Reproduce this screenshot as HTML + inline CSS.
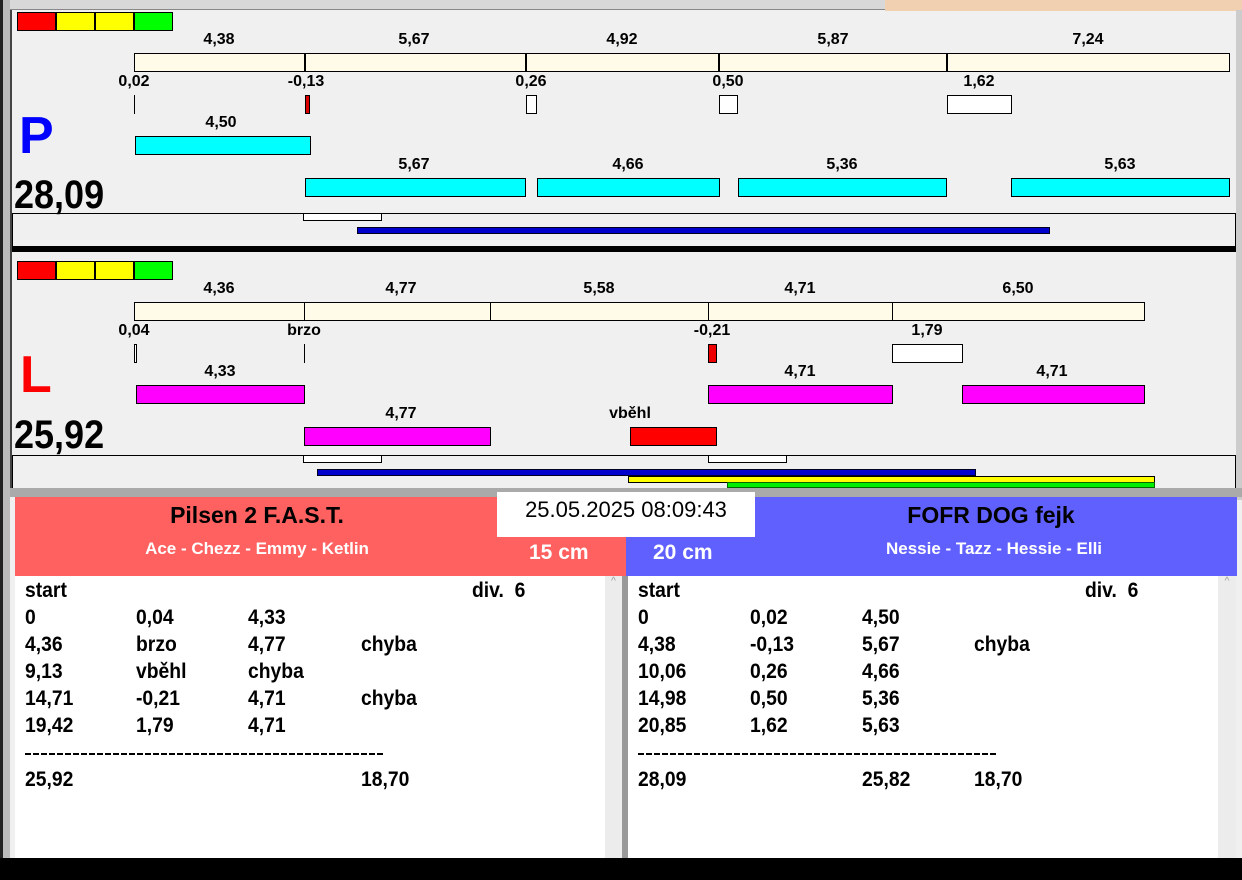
<!DOCTYPE html>
<html><head><meta charset="utf-8"><style>
*{margin:0;padding:0;box-sizing:border-box}
body{width:1242px;height:880px;position:relative;overflow:hidden;background:#f0f0f0;font-family:"Liberation Sans",sans-serif}
div{position:absolute}
.l{font-weight:bold;font-size:16px;transform:translateX(-50%);white-space:nowrap;line-height:18px;color:#000}
.b{border:1px solid #000}
.t{font-weight:bold;font-size:21px;line-height:24px;white-space:nowrap;transform:scaleX(0.92);transform-origin:left}
.d{height:2px;width:360px;background:repeating-linear-gradient(90deg,#000 0 6px,transparent 6px 8px)}
</style></head><body>
<!-- frame -->
<div style="left:0;top:0;width:1242px;height:10px;background:#d8d8d8;border-bottom:1px solid #888"></div>
<div style="left:885px;top:0;width:357px;height:11px;background:#f0d0b0"></div>
<div style="left:0;top:0;width:3px;height:880px;background:#222"></div>
<div style="left:3px;top:0;width:7px;height:880px;background:#bbb"></div>
<div style="left:10px;top:10px;width:2px;height:480px;background:#444"></div>
<div style="left:1236px;top:10px;width:6px;height:490px;background:#ccc"></div>

<!-- P section -->
<div style="left:17px;top:12px;width:39px;height:19px;background:#f00" class="b"></div>
<div style="left:56px;top:12px;width:39px;height:19px;background:#ff0" class="b"></div>
<div style="left:95px;top:12px;width:39px;height:19px;background:#ff0" class="b"></div>
<div style="left:134px;top:12px;width:39px;height:19px;background:#0f0" class="b"></div>

<div class="l" style="left:219px;top:31px">4,38</div>
<div class="l" style="left:414px;top:31px">5,67</div>
<div class="l" style="left:622px;top:31px">4,92</div>
<div class="l" style="left:833px;top:31px">5,87</div>
<div class="l" style="left:1088px;top:31px">7,24</div>
<div class="b" style="left:134px;top:53px;width:1096px;height:19px;background:#fffbe8"></div>
<div style="left:304px;top:53px;width:2px;height:19px;background:#000"></div>
<div style="left:525px;top:53px;width:2px;height:19px;background:#000"></div>
<div style="left:718px;top:53px;width:2px;height:19px;background:#000"></div>
<div style="left:946px;top:53px;width:2px;height:19px;background:#000"></div>

<div class="l" style="left:134px;top:73px">0,02</div>
<div class="l" style="left:306px;top:73px">-0,13</div>
<div class="l" style="left:531px;top:73px">0,26</div>
<div class="l" style="left:728px;top:73px">0,50</div>
<div class="l" style="left:979px;top:73px">1,62</div>
<div style="left:134px;top:95px;width:1px;height:19px;background:#000"></div>
<div class="b" style="left:305px;top:95px;width:5px;height:19px;background:#d00"></div>
<div class="b" style="left:526px;top:95px;width:11px;height:19px;background:#fff"></div>
<div class="b" style="left:719px;top:95px;width:19px;height:19px;background:#fff"></div>
<div class="b" style="left:947px;top:95px;width:65px;height:19px;background:#fff"></div>

<div style="left:19px;top:106px;font-size:52px;font-weight:bold;color:#00f;line-height:60px">P</div>
<div class="l" style="left:221px;top:114px">4,50</div>
<div class="b" style="left:135px;top:136px;width:176px;height:19px;background:#0ff"></div>
<div class="l" style="left:414px;top:156px">5,67</div>
<div class="l" style="left:628px;top:156px">4,66</div>
<div class="l" style="left:842px;top:156px">5,36</div>
<div class="l" style="left:1120px;top:156px">5,63</div>
<div class="b" style="left:305px;top:178px;width:221px;height:19px;background:#0ff"></div>
<div class="b" style="left:537px;top:178px;width:183px;height:19px;background:#0ff"></div>
<div class="b" style="left:738px;top:178px;width:209px;height:19px;background:#0ff"></div>
<div class="b" style="left:1011px;top:178px;width:219px;height:19px;background:#0ff"></div>
<div style="left:14px;top:172px;font-size:40px;font-weight:bold;line-height:46px;transform:scaleX(0.9);transform-origin:left">28,09</div>

<div class="b" style="left:12px;top:213px;width:1224px;height:34px;border-bottom:none"></div>
<div class="b" style="left:303px;top:213px;width:79px;height:8px;background:#fff"></div>
<div style="left:357px;top:227px;width:693px;height:7px;background:#00c;border:1px solid #002"></div>
<div style="left:12px;top:246px;width:1224px;height:6px;background:#000"></div>

<!-- L section -->
<div style="left:17px;top:261px;width:39px;height:19px;background:#f00" class="b"></div>
<div style="left:56px;top:261px;width:39px;height:19px;background:#ff0" class="b"></div>
<div style="left:95px;top:261px;width:39px;height:19px;background:#ff0" class="b"></div>
<div style="left:134px;top:261px;width:39px;height:19px;background:#0f0" class="b"></div>

<div class="l" style="left:219px;top:280px">4,36</div>
<div class="l" style="left:401px;top:280px">4,77</div>
<div class="l" style="left:599px;top:280px">5,58</div>
<div class="l" style="left:800px;top:280px">4,71</div>
<div class="l" style="left:1018px;top:280px">6,50</div>
<div class="b" style="left:134px;top:302px;width:1011px;height:19px;background:#fffbe8"></div>
<div style="left:304px;top:302px;width:1px;height:19px;background:#000"></div>
<div style="left:490px;top:302px;width:1px;height:19px;background:#000"></div>
<div style="left:708px;top:302px;width:1px;height:19px;background:#000"></div>
<div style="left:892px;top:302px;width:1px;height:19px;background:#000"></div>

<div class="l" style="left:134px;top:322px">0,04</div>
<div class="l" style="left:304px;top:322px">brzo</div>
<div class="l" style="left:712px;top:322px">-0,21</div>
<div class="l" style="left:927px;top:322px">1,79</div>
<div class="b" style="left:134px;top:344px;width:3px;height:19px;background:#fff"></div>
<div style="left:304px;top:344px;width:1px;height:19px;background:#000"></div>
<div class="b" style="left:708px;top:344px;width:9px;height:19px;background:#e00"></div>
<div class="b" style="left:892px;top:344px;width:71px;height:19px;background:#fff"></div>

<div style="left:20px;top:345px;font-size:52px;font-weight:bold;color:#f00;line-height:60px">L</div>
<div class="l" style="left:220px;top:363px">4,33</div>
<div class="l" style="left:800px;top:363px">4,71</div>
<div class="l" style="left:1052px;top:363px">4,71</div>
<div class="b" style="left:136px;top:385px;width:169px;height:19px;background:#f0f"></div>
<div class="b" style="left:708px;top:385px;width:185px;height:19px;background:#f0f"></div>
<div class="b" style="left:962px;top:385px;width:183px;height:19px;background:#f0f"></div>
<div class="l" style="left:401px;top:405px">4,77</div>
<div class="l" style="left:630px;top:405px">vběhl</div>
<div class="b" style="left:304px;top:427px;width:187px;height:19px;background:#f0f"></div>
<div class="b" style="left:630px;top:427px;width:87px;height:19px;background:#f00"></div>
<div style="left:14px;top:412px;font-size:40px;font-weight:bold;line-height:46px;transform:scaleX(0.9);transform-origin:left">25,92</div>

<div class="b" style="left:12px;top:455px;width:1224px;height:33px;border-bottom:none"></div>
<div class="b" style="left:303px;top:455px;width:79px;height:8px;background:#fff"></div>
<div class="b" style="left:708px;top:455px;width:79px;height:8px;background:#fff"></div>
<div style="left:317px;top:469px;width:659px;height:7px;background:#00c;border:1px solid #002"></div>
<div class="b" style="left:628px;top:476px;width:527px;height:7px;background:#ff0"></div>
<div style="left:727px;top:482px;width:428px;height:6px;background:#0e0;border:1px solid #060"></div>
<div style="left:10px;top:488px;width:1232px;height:9px;background:#aaa"></div>

<!-- bottom panels -->
<div style="left:15px;top:497px;width:611px;height:79px;background:#ff6060"></div>
<div style="left:626px;top:497px;width:611px;height:79px;background:#6060ff"></div>
<div style="left:257px;top:501px;font-size:23px;font-weight:bold;line-height:28px;transform:translateX(-50%);white-space:nowrap">Pilsen 2 F.A.S.T.</div>
<div style="left:257px;top:538px;font-size:17px;font-weight:bold;color:#fff;line-height:22px;transform:translateX(-50%);white-space:nowrap">Ace - Chezz - Emmy - Ketlin</div>
<div style="left:529px;top:540px;font-size:21px;font-weight:bold;color:#fff;line-height:26px;white-space:nowrap">15 cm</div>
<div style="left:991px;top:501px;font-size:23px;font-weight:bold;line-height:28px;transform:translateX(-50%);white-space:nowrap">FOFR DOG fejk</div>
<div style="left:994px;top:538px;font-size:17px;font-weight:bold;color:#fff;line-height:22px;transform:translateX(-50%);white-space:nowrap">Nessie - Tazz - Hessie - Elli</div>
<div style="left:653px;top:540px;font-size:21px;font-weight:bold;color:#fff;line-height:26px;white-space:nowrap">20 cm</div>
<div style="left:497px;top:492px;width:258px;height:45px;background:#fff;font-size:22px;line-height:36px;text-align:center;white-space:nowrap">25.05.2025 08:09:43</div>

<div style="left:15px;top:576px;width:590px;height:282px;background:#fff"></div>
<div style="left:605px;top:576px;width:17px;height:282px;background:#ececec;font-size:10px;color:#999;text-align:center">^</div>
<div style="left:622px;top:576px;width:6px;height:282px;background:#999"></div>
<div style="left:628px;top:576px;width:590px;height:282px;background:#fff"></div>
<div style="left:1218px;top:576px;width:18px;height:282px;background:#ececec;font-size:10px;color:#999;text-align:center">^</div>

<div class="t" style="left:25px;top:579px">start</div><div class="t" style="left:472px;top:579px">div.&nbsp; 6</div>
<div class="t" style="left:25px;top:606px">0</div><div class="t" style="left:136px;top:606px">0,04</div><div class="t" style="left:248px;top:606px">4,33</div>
<div class="t" style="left:25px;top:633px">4,36</div><div class="t" style="left:136px;top:633px">brzo</div><div class="t" style="left:248px;top:633px">4,77</div><div class="t" style="left:361px;top:633px">chyba</div>
<div class="t" style="left:25px;top:660px">9,13</div><div class="t" style="left:136px;top:660px">vběhl</div><div class="t" style="left:248px;top:660px">chyba</div>
<div class="t" style="left:25px;top:687px">14,71</div><div class="t" style="left:136px;top:687px">-0,21</div><div class="t" style="left:248px;top:687px">4,71</div><div class="t" style="left:361px;top:687px">chyba</div>
<div class="t" style="left:25px;top:714px">19,42</div><div class="t" style="left:136px;top:714px">1,79</div><div class="t" style="left:248px;top:714px">4,71</div>
<div class="d" style="left:25px;top:753px"></div>
<div class="t" style="left:25px;top:768px">25,92</div><div class="t" style="left:361px;top:768px">18,70</div>

<div class="t" style="left:638px;top:579px">start</div><div class="t" style="left:1085px;top:579px">div.&nbsp; 6</div>
<div class="t" style="left:638px;top:606px">0</div><div class="t" style="left:750px;top:606px">0,02</div><div class="t" style="left:862px;top:606px">4,50</div>
<div class="t" style="left:638px;top:633px">4,38</div><div class="t" style="left:750px;top:633px">-0,13</div><div class="t" style="left:862px;top:633px">5,67</div><div class="t" style="left:974px;top:633px">chyba</div>
<div class="t" style="left:638px;top:660px">10,06</div><div class="t" style="left:750px;top:660px">0,26</div><div class="t" style="left:862px;top:660px">4,66</div>
<div class="t" style="left:638px;top:687px">14,98</div><div class="t" style="left:750px;top:687px">0,50</div><div class="t" style="left:862px;top:687px">5,36</div>
<div class="t" style="left:638px;top:714px">20,85</div><div class="t" style="left:750px;top:714px">1,62</div><div class="t" style="left:862px;top:714px">5,63</div>
<div class="d" style="left:638px;top:753px"></div>
<div class="t" style="left:638px;top:768px">28,09</div><div class="t" style="left:862px;top:768px">25,82</div><div class="t" style="left:974px;top:768px">18,70</div>

<div style="left:0;top:858px;width:1242px;height:22px;background:#000"></div>
</body></html>
